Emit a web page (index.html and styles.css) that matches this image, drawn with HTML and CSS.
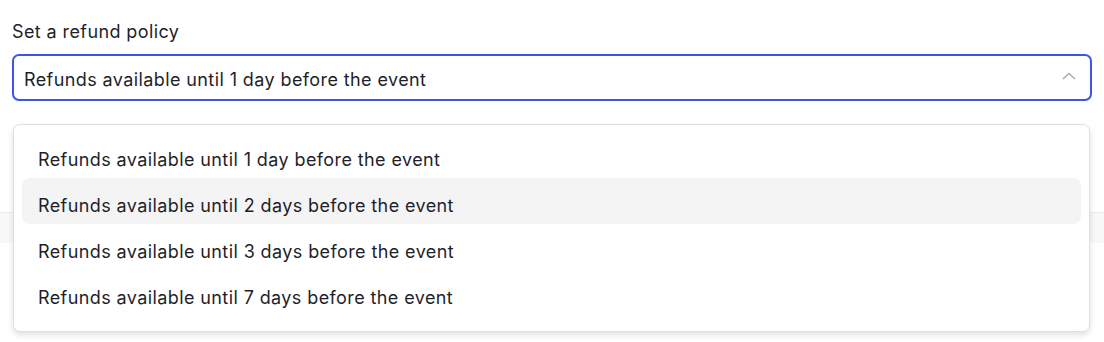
FILE: index.html
```html
<!DOCTYPE html>
<html lang="en">
<head>
    <meta charset="UTF-8">
    <title>Refund policy</title>
    <link rel="stylesheet" href="styles.css">
</head>
<body>
    <div class="field">
        <label class="field-label" for="refundPolicy">Set a refund policy</label>
        <div class="select" id="refundPolicy">
            <span class="select-value">Refunds available until 1 day before the event</span>
            <svg class="chevron" width="14" height="8" viewBox="0 0 14 8">
                <path d="M1 7 L7 1.5 L13 7" fill="none" stroke="#a9adb5" stroke-width="1.6"/>
            </svg>
        </div>
    </div>

    <div class="behind">
        <div class="band"></div>
    </div>

    <ul class="menu">
        <li class="option">Refunds available until 1 day before the event</li>
        <li class="option hover">Refunds available until 2 days before the event</li>
        <li class="option">Refunds available until 3 days before the event</li>
        <li class="option">Refunds available until 7 days before the event</li>
    </ul>
</body>
</html>
```

FILE: styles.css
```css
body {
    margin: 0;
    padding: 0 12px;
    font-family: Inter, "Liberation Sans", sans-serif;
    font-size: 18px;
    letter-spacing: 0.4px;
    color: #1e1f2a;
    background: #fff;
    position: relative;
    height: 342px;
    overflow: hidden;
}

.field {
    padding-top: 20px;
}

.field-label {
    display: block;
    line-height: 24px;
    margin-bottom: 10px;
}

.select {
    display: flex;
    align-items: center;
    justify-content: space-between;
    box-sizing: border-box;
    height: 47px;
    border: 2px solid #3d54e6;
    border-radius: 7px;
    padding: 3px 14px 0 10px;
}

.chevron {
    margin-top: -7px;
}

.behind {
    margin: 111px -12px 0;
}

.band {
    height: 30px;
    border-top: 1px solid #ececec;
    background: #f8f8f8;
}

.menu {
    position: absolute;
    top: 124px;
    left: 13px;
    width: 1059px;
    margin: 0;
    padding: 7px 8px 15px;
    list-style: none;
    background: #fff;
    border: 1px solid #dddfe3;
    border-radius: 7px;
    box-shadow: 0 3px 6px rgba(0, 0, 0, 0.12);
}

.option {
    display: flex;
    align-items: center;
    box-sizing: border-box;
    height: 46px;
    padding: 8px 0 0 16px;
    border-radius: 8px;
}

.option.hover {
    background: #f4f4f5;
}
```
